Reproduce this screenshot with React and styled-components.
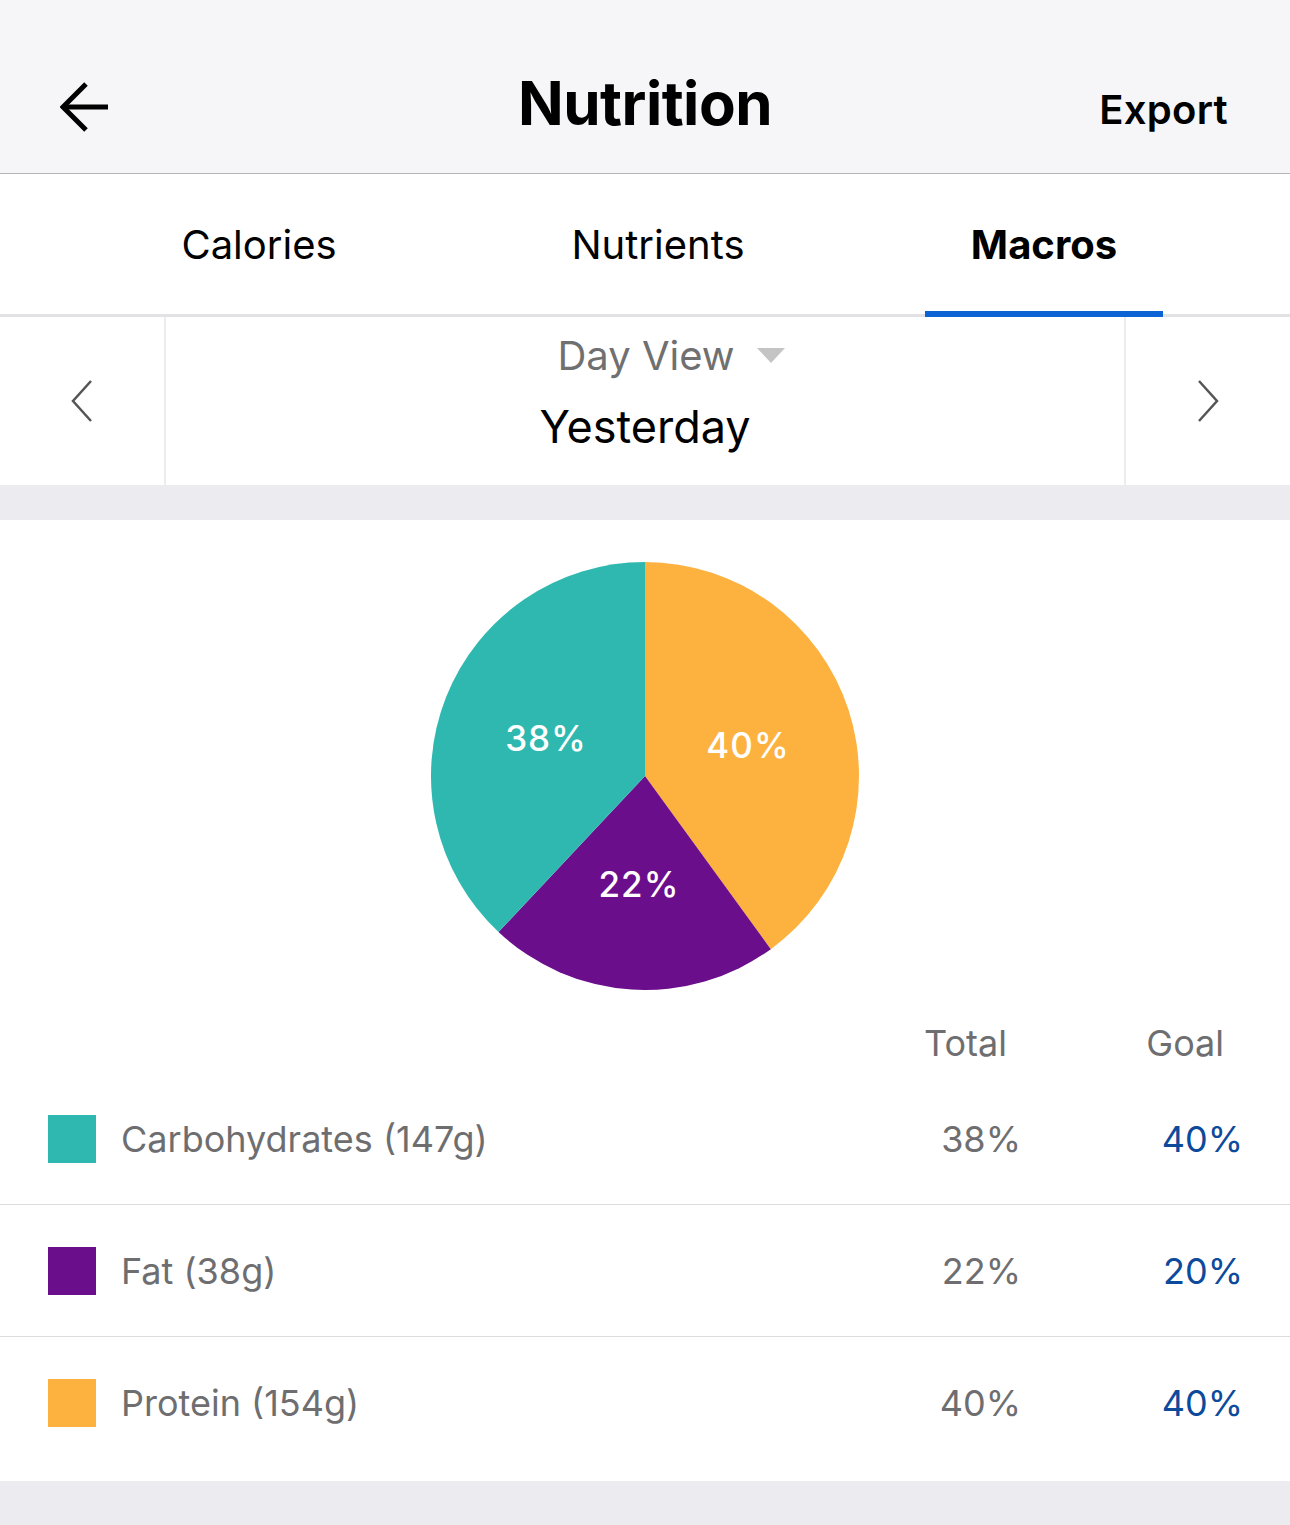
import React from "react";
import styled, { createGlobalStyle } from "styled-components";

const GlobalStyle = createGlobalStyle`
  html, body {
    margin: 0;
    padding: 0;
    background: #ebebf0;
    font-family: Inter, "Noto Sans", "Liberation Sans", sans-serif;
    -webkit-font-smoothing: antialiased;
  }
  * { box-sizing: border-box; }
`;

const Page = styled.div`
  width: 1290px;
  min-height: 1525px;
  background: #ebebf0;
`;

const Header = styled.header`
  display: flex;
  align-items: center;
  justify-content: space-between;
  height: 174px;
  padding: 40px 62px 0 60px;
  background: #f6f6f8;
  border-bottom: 1px solid #b4b4b8;
  position: relative;
`;

const BackButton = styled.button`
  width: 50px;
  height: 50px;
  padding: 0;
  border: none;
  background: none;
  display: flex;
  align-items: center;
  justify-content: center;
`;

const Title = styled.h1`
  position: absolute;
  left: 0;
  right: 0;
  top: 32px;
  bottom: 0;
  margin: 0;
  display: flex;
  align-items: center;
  justify-content: center;
  font-size: 60px;
  font-weight: 700;
  letter-spacing: -0.5px;
  color: #000;
  pointer-events: none;
`;

const ExportButton = styled.button`
  border: none;
  background: none;
  padding: 0;
  margin-top: 6px;
  font-family: inherit;
  font-size: 40px;
  font-weight: 600;
  letter-spacing: 0.3px;
  color: #000;
`;

const Tabs = styled.nav`
  display: grid;
  grid-template-columns: 518px 280px 1fr;
  height: 143px;
  background: #fff;
  border-bottom: 3px solid #e2e2e4;
`;

const Tab = styled.div`
  display: flex;
  justify-content: center;
  align-items: center;
`;

const TabLabel = styled.span`
  position: relative;
  height: 100%;
  display: flex;
  align-items: center;
  justify-content: center;
  width: 238px;
  font-size: 40px;
  font-weight: ${p => (p.active ? 700 : 400)};
  color: #000;
  &::after {
    content: "";
    display: ${p => (p.active ? "block" : "none")};
    position: absolute;
    left: 0;
    right: 0;
    bottom: -3px;
    height: 6px;
    background: #0b63d6;
  }
`;

const DateBar = styled.div`
  display: flex;
  height: 168px;
  background: #fff;
`;

const NavCell = styled.button`
  width: 166px;
  border: none;
  background: #fff;
  padding: 0;
  display: flex;
  align-items: center;
  justify-content: center;
  ${p => (p.side === "left" ? "border-right: 2px solid #ececee;" : "border-left: 2px solid #ececee;")}
`;

const DateCenter = styled.div`
  flex: 1;
  display: flex;
  flex-direction: column;
  align-items: center;
  padding-top: 14px;
`;

const ViewPicker = styled.div`
  display: flex;
  align-items: center;
  gap: 22px;
  font-size: 40px;
  color: #707070;
  padding-left: 52px;
`;

const Caret = styled.span`
  width: 0;
  height: 0;
  border-left: 14px solid transparent;
  border-right: 14px solid transparent;
  border-top: 15px solid #c4c4c4;
`;

const DateLabel = styled.div`
  font-size: 45px;
  color: #000;
  margin-top: 19px;
`;

const Gap = styled.div`
  height: 35px;
  background: #ebebf0;
`;

const Card = styled.section`
  background: #fff;
  padding: 42px 0 12px;
`;

const PieWrap = styled.div`
  display: flex;
  justify-content: center;
`;

const TableHead = styled.div`
  display: flex;
  align-items: flex-end;
  height: 83px;
  padding: 0 47px 8px 48px;
`;

const Row = styled.div`
  display: flex;
  align-items: center;
  height: 132px;
  padding: 0 47px 0 48px;
  border-bottom: ${p => (p.last ? "none" : "1px solid #dcdcde")};
`;

const Swatch = styled.span`
  width: 48px;
  height: 48px;
  background: ${p => p.color};
  margin-right: 25px;
  flex-shrink: 0;
`;

const Label = styled.span`
  flex: 1;
  font-size: 36px;
  color: #6e6e70;
`;

const Cell = styled.span`
  width: ${p => p.width}px;
  text-align: right;
  font-size: 36px;
  color: ${p => p.color || "#6e6e70"};
  padding-right: ${p => p.pad || 0}px;
`;

const Spacer = styled.span`
  flex: 1;
`;

const macros = [
  { name: "Carbohydrates (147g)", color: "#2fb8af", total: 38, goal: 40 },
  { name: "Fat (38g)", color: "#6a0e8c", total: 22, goal: 20 },
  { name: "Protein (154g)", color: "#fdb240", total: 40, goal: 40 },
];

const pieOrder = [
  { color: "#fdb240", value: 40, label: [317, 196] },
  { color: "#6a0e8c", value: 22, label: [208, 335] },
  { color: "#2fb8af", value: 38, label: [115, 189] },
];

function slicePath(cx, cy, r, a0, a1) {
  const p = a => [cx + r * Math.sin(a), cy - r * Math.cos(a)];
  const [x0, y0] = p(a0);
  const [x1, y1] = p(a1);
  const large = a1 - a0 > Math.PI ? 1 : 0;
  return `M${cx},${cy} L${x0},${y0} A${r},${r} 0 ${large} 1 ${x1},${y1} Z`;
}

function Pie() {
  let start = 0;
  return (
    <svg width="428" height="428" viewBox="0 0 428 428">
      {pieOrder.map((s, i) => {
        const end = start + (s.value / 100) * Math.PI * 2;
        const d = slicePath(214, 214, 214, start, end);
        start = end;
        return <path key={i} d={d} fill={s.color} />;
      })}
      {pieOrder.map((s, i) => (
        <text
          key={"t" + i}
          x={s.label[0]}
          y={s.label[1]}
          textAnchor="middle"
          fill="#fff"
          fontSize="35"
          fontWeight="500"
          fontFamily="Inter, 'Noto Sans', sans-serif"
          letterSpacing="1"
        >
          {s.value}%
        </text>
      ))}
    </svg>
  );
}

export default function App() {
  return (
    <Page>
      <GlobalStyle />
      <Header>
        <BackButton aria-label="Back">
          <svg width="50" height="50" viewBox="0 0 50 50" fill="none" stroke="#000" strokeWidth="5">
            <path d="M48 25 H4" />
            <path d="M26 2 L3 25 L26 48" strokeLinejoin="miter" />
          </svg>
        </BackButton>
        <Title>Nutrition</Title>
        <ExportButton>Export</ExportButton>
      </Header>

      <Tabs>
        <Tab><TabLabel>Calories</TabLabel></Tab>
        <Tab><TabLabel>Nutrients</TabLabel></Tab>
        <Tab><TabLabel active>Macros</TabLabel></Tab>
      </Tabs>

      <DateBar>
        <NavCell side="left" aria-label="Previous day">
          <svg width="24" height="44" viewBox="0 0 24 44" fill="none" stroke="#555" strokeWidth="2.5">
            <path d="M21 2 L3 22 L21 42" />
          </svg>
        </NavCell>
        <DateCenter>
          <ViewPicker>
            Day View
            <Caret />
          </ViewPicker>
          <DateLabel>Yesterday</DateLabel>
        </DateCenter>
        <NavCell side="right" aria-label="Next day">
          <svg width="24" height="44" viewBox="0 0 24 44" fill="none" stroke="#555" strokeWidth="2.5">
            <path d="M3 2 L21 22 L3 42" />
          </svg>
        </NavCell>
      </DateBar>

      <Gap />

      <Card>
        <PieWrap>
          <Pie />
        </PieWrap>
        <TableHead>
          <Spacer />
          <Cell width={150} pad={14}>Total</Cell>
          <Cell width={222} pad={19}>Goal</Cell>
        </TableHead>
        {macros.map((m, i) => (
          <Row key={m.name} last={i === macros.length - 1}>
            <Swatch color={m.color} />
            <Label>{m.name}</Label>
            <Cell width={150}>{m.total}%</Cell>
            <Cell width={222} color="#0d4a9c">{m.goal}%</Cell>
          </Row>
        ))}
      </Card>
    </Page>
  );
}
